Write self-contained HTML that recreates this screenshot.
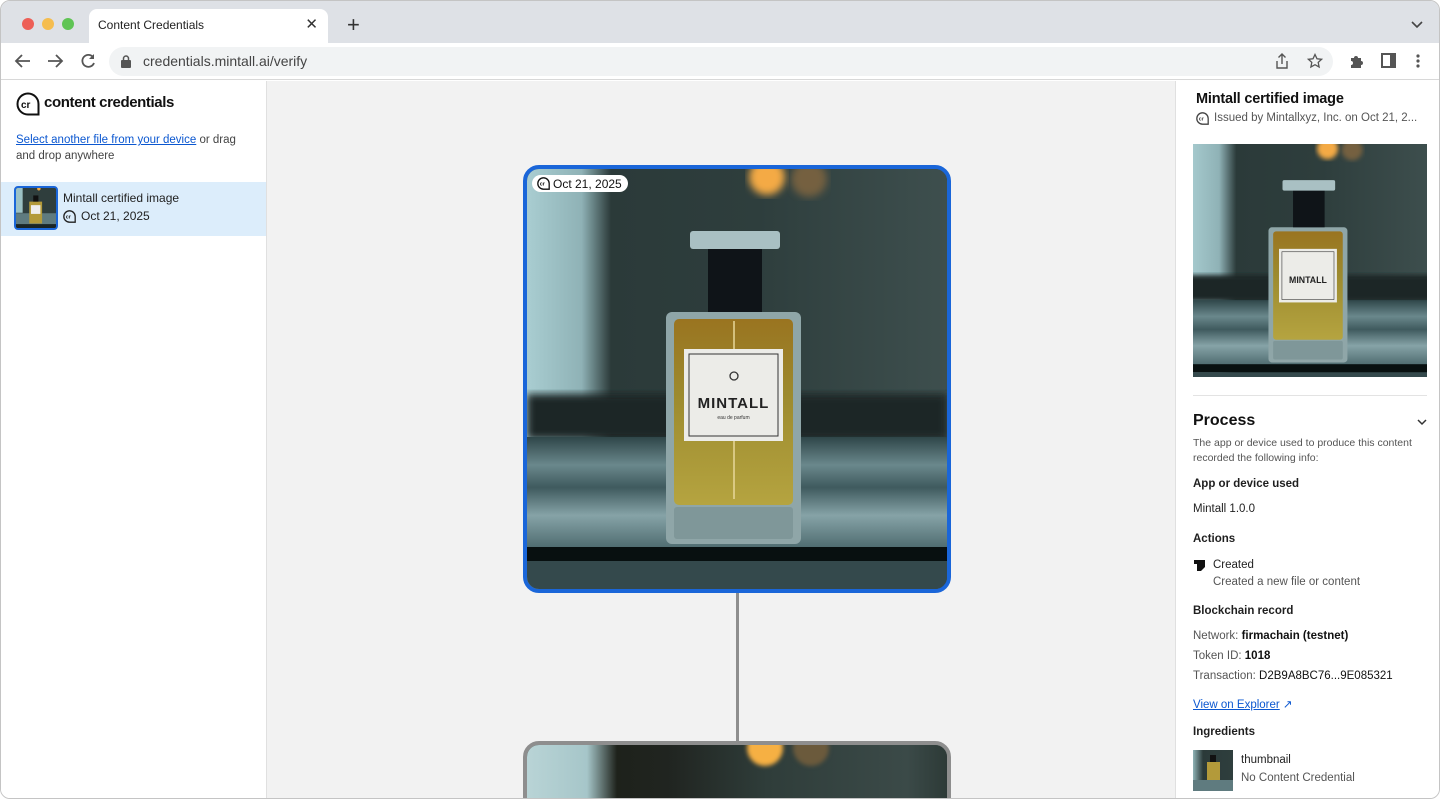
<!DOCTYPE html>
<html><head><meta charset="utf-8"><style>
*{box-sizing:border-box;margin:0;padding:0}
body{width:1440px;height:799px;overflow:hidden;background:#fff;font-family:"Liberation Sans",sans-serif;color:#1f1f1f;position:relative}
.abs{position:absolute}
.win{position:absolute;left:0;top:0;width:1440px;height:799px;border:1px solid #c4c4c4;border-radius:10px;overflow:hidden;background:#fff}
.tabbar{position:absolute;left:0;top:0;width:1440px;height:42px;background:#dee1e6}
.dot{position:absolute;top:17px;width:12px;height:12px;border-radius:50%}
.tab{position:absolute;left:88px;top:8px;width:239px;height:34px;background:#fff;border-radius:8px 8px 0 0;font-size:12px;padding:9px 0 0 9px;color:#222}
.tb{position:absolute;left:0;top:42px;width:1440px;height:37px;background:#fff;border-bottom:1px solid #d8d8d8}
.omni{position:absolute;left:108px;top:4px;width:1224px;height:29px;background:#f1f3f4;border-radius:15px;font-size:14px;color:#444;padding:6px 0 0 34px}
.side{position:absolute;left:0;top:80px;width:266px;height:719px;background:#fff;border-right:1px solid #e0e0e0}
.center{position:absolute;left:266px;top:80px;width:909px;height:719px;background:#f2f2f2;overflow:hidden}
.right{position:absolute;left:1174px;top:80px;width:266px;height:719px;background:#fff;border-left:1px solid #e0e0e0}
.h{font-size:11.5px;font-weight:bold;color:#1f1f1f}
.t{font-size:11.5px;color:#1f1f1f;white-space:nowrap}
.g{color:#555}
</style></head><body>
<div class="win">
<div class="tabbar">
 <div class="dot" style="left:21px;background:#ed5f57"></div>
 <div class="dot" style="left:41px;background:#f5bd4f"></div>
 <div class="dot" style="left:61px;background:#5fc454"></div>
 <div class="tab">Content Credentials<span style="position:absolute;right:10px;top:6px;font-size:15px;color:#333">✕</span></div>
 <div class="abs" style="left:346px;top:13px;font-size:22px;color:#333;line-height:22px">+</div>
 <svg class="abs" style="left:1410px;top:20px" width="12" height="8"><path d="M1 1l5 5 5-5" stroke="#444" stroke-width="1.6" fill="none"/></svg>
</div>
<div class="tb">
 <svg class="abs" style="left:13px;top:10px" width="18" height="16"><path d="M16 8H3M8 2L2 8l6 6" stroke="#555" stroke-width="1.8" fill="none"/></svg>
 <svg class="abs" style="left:45px;top:10px" width="18" height="16"><path d="M2 8h13M10 2l6 6-6 6" stroke="#555" stroke-width="1.8" fill="none"/></svg>
 <svg class="abs" style="left:78px;top:9px" width="18" height="18"><path d="M14 5A6 6 0 1 0 15 11" stroke="#555" stroke-width="1.8" fill="none"/><path d="M15 2v5h-5z" fill="#555"/></svg>
 <div class="omni"><svg class="abs" style="left:12px;top:8px" width="10" height="13"><rect x="0" y="5" width="10" height="8" rx="1" fill="#555"/><path d="M2.5 5V3.5a2.5 2.5 0 0 1 5 0V5" stroke="#555" stroke-width="1.5" fill="none"/></svg>credentials.mintall.ai/verify
  <svg class="abs" style="left:1166px;top:6px" width="14" height="17"><path d="M7 1v10M3.5 4.5L7 1l3.5 3.5M2 8v7h10V8" stroke="#555" stroke-width="1.4" fill="none"/></svg>
  <svg class="abs" style="left:1198px;top:6px" width="16" height="16"><path d="M8 1.5l2 4.3 4.6.5-3.4 3.1.9 4.6L8 11.7 3.9 14l.9-4.6L1.4 6.3 6 5.8z" stroke="#555" stroke-width="1.3" fill="none"/></svg>
 </div>
 <svg class="abs" style="left:1348px;top:10px" width="16" height="16"><path d="M2 5h3a2 2 0 1 1 4 0h3v3a2 2 0 1 1 0 4v3H2v-3a2 2 0 1 0 0-4z" fill="#555"/></svg>
 <svg class="abs" style="left:1380px;top:10px" width="16" height="16"><rect x="1" y="1" width="13" height="13" fill="none" stroke="#555" stroke-width="2"/><rect x="9" y="1" width="5" height="13" fill="#555"/></svg>
 <svg class="abs" style="left:1414px;top:10px" width="6" height="16"><circle cx="3" cy="3" r="1.6" fill="#555"/><circle cx="3" cy="8" r="1.6" fill="#555"/><circle cx="3" cy="13" r="1.6" fill="#555"/></svg>
</div>

<div class="side">
 <svg class="abs" style="left:15px;top:11px" width="24" height="24" viewBox="0 0 24 24"><path d="M12 22.5A10.5 10.5 0 1 1 22.5 12v10.5z" fill="none" stroke="#111" stroke-width="2"/><text x="5" y="16" font-size="10" font-weight="bold" font-family="Liberation Sans" fill="#111">cr</text></svg>
 <div class="abs" style="left:43px;top:13px;font-size:15px;font-weight:bold;letter-spacing:-0.4px;color:#111">content credentials</div>
 <div class="abs" style="left:15px;top:51px;width:240px;font-size:11.5px;line-height:16px;color:#444"><span style="color:#0b57d0;text-decoration:underline">Select another file from your device</span> or drag and drop anywhere</div>
 <div class="abs" style="left:0;top:101px;width:265px;height:54px;background:#dcedfb"></div>
 <div class="abs" style="left:13px;top:105px;width:44px;height:44px;border:2px solid #1a66d9;border-radius:4px;overflow:hidden;background:#3a4a49">
  <svg width="40" height="40" viewBox="0 0 420 420" preserveAspectRatio="none"><rect width="420" height="420" fill="#2f3e3d"/><rect width="70" height="260" fill="#9cc1c4"/><rect y="265" width="420" height="115" fill="#5f7b7f"/><rect y="380" width="420" height="40" fill="#1a2525"/><rect x="139" y="143" width="135" height="230" fill="#b39a3a"/><rect x="181" y="78" width="54" height="65" fill="#111"/><rect x="157" y="180" width="99" height="92" fill="#eee"/><circle cx="240" cy="8" r="18" fill="#f2a840"/></svg>
 </div>
 <div class="abs t" style="left:62px;top:110px;font-size:12px">Mintall certified image</div>
 <svg class="abs" style="left:62px;top:129px" width="13" height="13" viewBox="0 0 24 24"><path d="M12 22.5A10.5 10.5 0 1 1 22.5 12v10.5z" fill="none" stroke="#222" stroke-width="2.4"/><text x="5" y="16" font-size="10" font-weight="bold" font-family="Liberation Sans" fill="#222">cr</text></svg>
 <div class="abs t" style="left:80px;top:128px;font-size:12px">Oct 21, 2025</div>
</div>

<div class="center">
 <div class="abs" style="left:469px;top:512px;width:3px;height:150px;background:#8e8e8e"></div>
 <div class="abs" style="left:256px;top:660px;width:428px;height:100px;border:4px solid #8e8e8e;border-radius:16px;overflow:hidden;background:#2d3c3b">
  <div style="position:absolute;left:0;top:0;width:420px;height:100px;background:linear-gradient(90deg,#b9d4d6 0,#a6c6c9 60px,#1e221b 90px,#202420 140px,#2f3d3a 240px,#3b4a48 380px,#2d3a37 420px)"></div>
  <div style="position:absolute;left:220px;top:-15px;width:36px;height:36px;border-radius:50%;background:#f6b043;filter:blur(2px)"></div>
  <div style="position:absolute;left:266px;top:-15px;width:36px;height:36px;border-radius:50%;background:#6b5a3c;filter:blur(2px)"></div>
 </div>
 <div class="abs" style="left:256px;top:84px;width:428px;height:428px;border:4px solid #1a66d9;border-radius:16px;overflow:hidden;background:#2d3c3b">
  <svg width="420" height="420" viewBox="0 0 420 420">
   <defs>
    <linearGradient id="bg" x1="0" x2="1" y1="0" y2="0"><stop offset="0" stop-color="#a9cdd1"/><stop offset=".13" stop-color="#8fb2b6"/><stop offset=".2" stop-color="#2b3a39"/><stop offset=".55" stop-color="#2e3e3d"/><stop offset="1" stop-color="#3e4f4e"/></linearGradient>
    <linearGradient id="fl" x1="0" x2="0" y1="0" y2="1"><stop offset="0" stop-color="#2f4649"/><stop offset=".25" stop-color="#6a888c"/><stop offset=".45" stop-color="#3f5a5e"/><stop offset=".7" stop-color="#86a3a7"/><stop offset="1" stop-color="#4d6a6e"/></linearGradient>
    <linearGradient id="lq" x1="0" x2="0" y1="0" y2="1"><stop offset="0" stop-color="#9a7420"/><stop offset=".4" stop-color="#9c8a2e"/><stop offset="1" stop-color="#b5a440"/></linearGradient>
    <filter id="bl"><feGaussianBlur stdDeviation="4"/></filter>
   </defs>
   <rect width="420" height="420" fill="url(#bg)"/>
   <rect x="0" y="225" width="420" height="45" fill="#1a2727" filter="url(#bl)"/>
   <rect y="268" width="420" height="112" fill="url(#fl)"/>
   <rect y="378" width="420" height="14" fill="#081010"/>
   <rect y="392" width="420" height="28" fill="#34494c"/>
   <circle cx="240" cy="8" r="18" fill="#f4aa44" filter="url(#bl)"/>
   <circle cx="282" cy="10" r="18" fill="#74613f" filter="url(#bl)"/>
   <rect x="139" y="143" width="135" height="232" rx="6" fill="#8fa6a8"/>
   <rect x="147" y="150" width="119" height="186" rx="5" fill="url(#lq)"/>
   <rect x="147" y="338" width="119" height="32" rx="3" fill="#7f9799"/>
   <path d="M207 152V330" stroke="#e7d79a" stroke-width="1.5"/>
   <rect x="181" y="78" width="54" height="65" fill="#0f1418"/>
   <rect x="163" y="62" width="90" height="18" rx="3" fill="#a9c0c3"/>
   <rect x="157" y="180" width="99" height="92" fill="#ecece8"/>
   <rect x="162" y="185" width="89" height="82" fill="none" stroke="#333" stroke-width="1"/>
   <circle cx="207" cy="207" r="4" fill="none" stroke="#333" stroke-width="1.3"/>
   <text x="206.5" y="239" text-anchor="middle" font-family="Liberation Sans" font-size="15" font-weight="bold" fill="#222" letter-spacing="1">MINTALL</text>
   <text x="206.5" y="250" text-anchor="middle" font-family="Liberation Sans" font-size="5" fill="#333">eau de parfum</text>
  </svg>
  <div class="abs" style="left:5px;top:6px;height:17px;background:#fff;border-radius:9px;font-size:12px;padding:2px 6px 0 21px;color:#111;white-space:nowrap">Oct 21, 2025
   <svg class="abs" style="left:5px;top:2px" width="13" height="13" viewBox="0 0 24 24"><path d="M12 22.5A10.5 10.5 0 1 1 22.5 12v10.5z" fill="none" stroke="#111" stroke-width="2.4"/><text x="5" y="16" font-size="10" font-weight="bold" font-family="Liberation Sans" fill="#111">cr</text></svg></div>
 </div>
</div>

<div class="right">
 <div class="abs" style="left:20px;top:10px;font-size:14.5px;font-weight:bold;color:#111;letter-spacing:-0.2px">Mintall certified image</div>
 <svg class="abs" style="left:20px;top:31px" width="13" height="13" viewBox="0 0 24 24"><path d="M12 22.5A10.5 10.5 0 1 1 22.5 12v10.5z" fill="none" stroke="#444" stroke-width="2.4"/><text x="5" y="16" font-size="10" font-weight="bold" font-family="Liberation Sans" fill="#444">cr</text></svg>
 <div class="abs g t" style="left:38px;top:31px;font-size:11.5px">Issued by Mintallxyz, Inc. on Oct 21, 2...</div>
 <div class="abs" style="left:17px;top:63px;width:234px;height:233px;overflow:hidden">
  <svg width="234" height="233" viewBox="10 0 400 400" preserveAspectRatio="none">
   <rect width="420" height="420" fill="url(#bg)"/>
   <rect y="225" width="420" height="45" fill="#1a2727" filter="url(#bl)"/>
   <rect y="268" width="420" height="112" fill="url(#fl)"/>
   <rect y="378" width="420" height="14" fill="#081010"/>
   <rect y="392" width="420" height="28" fill="#34494c"/>
   <circle cx="240" cy="8" r="18" fill="#f4aa44" filter="url(#bl)"/>
   <circle cx="282" cy="10" r="18" fill="#74613f" filter="url(#bl)"/>
   <rect x="139" y="143" width="135" height="232" rx="6" fill="#8fa6a8"/>
   <rect x="147" y="150" width="119" height="186" rx="5" fill="url(#lq)"/>
   <rect x="147" y="338" width="119" height="32" rx="3" fill="#7f9799"/>
   <rect x="181" y="78" width="54" height="65" fill="#0f1418"/>
   <rect x="163" y="62" width="90" height="18" rx="3" fill="#a9c0c3"/>
   <rect x="157" y="180" width="99" height="92" fill="#ecece8"/>
   <rect x="162" y="185" width="89" height="82" fill="none" stroke="#333"/>
   <text x="206.5" y="239" text-anchor="middle" font-family="Liberation Sans" font-size="15" font-weight="bold" fill="#222">MINTALL</text>
  </svg>
 </div>
 <div class="abs" style="left:17px;top:314px;width:234px;height:1px;background:#e3e3e3"></div>
 <div class="abs" style="left:17px;top:331px;font-size:16px;font-weight:bold;color:#111">Process</div>
 <svg class="abs" style="left:241px;top:338px" width="10" height="7"><path d="M1 1l4 4 4-4" stroke="#333" stroke-width="1.5" fill="none"/></svg>
 <div class="abs g" style="left:17px;top:355px;width:240px;font-size:10.5px;line-height:15px">The app or device used to produce this content recorded the following info:</div>
 <div class="abs h" style="left:17px;top:397px">App or device used</div>
 <div class="abs t" style="left:17px;top:422px">Mintall 1.0.0</div>
 <div class="abs h" style="left:17px;top:452px">Actions</div>
 <svg class="abs" style="left:18px;top:479px" width="11" height="11"><path d="M0 0h11v7l-4 4H3V4H0z" fill="#111"/></svg>
 <div class="abs t" style="left:37px;top:478px">Created</div>
 <div class="abs t g" style="left:37px;top:495px">Created a new file or content</div>
 <div class="abs h" style="left:17px;top:524px">Blockchain record</div>
 <div class="abs t g" style="left:17px;top:549px">Network: <b style="color:#111">firmachain (testnet)</b></div>
 <div class="abs t g" style="left:17px;top:569px">Token ID: <b style="color:#111">1018</b></div>
 <div class="abs t g" style="left:17px;top:589px">Transaction: <span style="color:#111">D2B9A8BC76...9E085321</span></div>
 <div class="abs t" style="left:17px;top:616px;color:#0b57d0"><span style="text-decoration:underline">View on Explorer</span> ↗</div>
 <div class="abs h" style="left:17px;top:645px">Ingredients</div>
 <div class="abs" style="left:17px;top:669px;width:40px;height:41px;background:linear-gradient(90deg,#8fb3b6 0,#2b3a39 25%,#2e3e3d 100%);overflow:hidden">
  <div class="abs" style="left:14px;top:12px;width:13px;height:20px;background:#b39a3a"></div>
  <div class="abs" style="left:17px;top:5px;width:6px;height:7px;background:#111"></div>
  <div class="abs" style="left:0;top:30px;width:40px;height:11px;background:#5f7b7f"></div>
 </div>
 <div class="abs t" style="left:65px;top:673px">thumbnail</div>
 <div class="abs t g" style="left:65px;top:691px">No Content Credential</div>
</div>
</div>
</body></html>
